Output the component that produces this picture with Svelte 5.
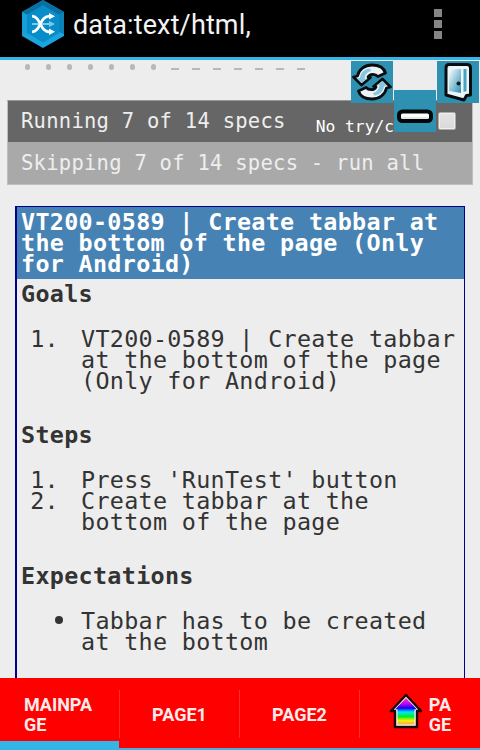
<script>
  const symbols = Array.from({ length: 14 }, (_, i) => (i < 7 ? 'passed' : 'skipped'));
  const tabs = [
    { lines: ['MAINPA', 'GE'], active: true },
    { lines: ['PAGE1'] },
    { lines: ['PAGE2'] },
    { lines: ['PA', 'GE'], icon: true }
  ];
</script>

<div class="screen">
  <header>
    <svg class="logo" width="42" height="48" viewBox="0 0 42 48">
      <path d="M21 0 42 12V36L21 48 0 36V12Z" fill="#1ca4df" />
      <path d="M21 0 42 12V34L37 31V15L21 5.500 5 15 0 12Z" fill="#0871a1" />
      <path d="M37 14.500 42 12V34L37 32Z" fill="#0b82b8" />
      <path d="M0 12 5 15V33L0 36Z" fill="#189fd9" />
      <path d="M21 5.500 37 15V33L21 42.500 5 33V15Z" fill="#078dc8" />
      <path d="M10 24H28" stroke="#7fc8e8" stroke-width="2" fill="none" />
      <path d="m27 21 6 3-6 3Z" fill="#7fc8e8" />
      <path d="M10 16.200C19 16 17 32 28 31.800M10 31.800C19 32 17 16 28 16.200" stroke="#fff" stroke-width="2.700" fill="none" />
      <path d="m27 13 6 3.200-6 3.200ZM27 28.600l6 3.200-6 3.200Z" fill="#fff" />
    </svg>
    <h1>data:text/html,</h1>
    <div class="menu"><i></i><i></i><i></i></div>
  </header>

  <main>
    <div class="symbols">
      {#each symbols as s}<span class={s}></span>{/each}
    </div>

    <section class="alert">
      <div class="bar running">
        <span>Running 7 of 14 specs</span>
        <span class="catch">No try/catch</span>
        <span class="check"></span>
      </div>
      <div class="bar skipping">Skipping 7 of 14 specs - run all</div>
    </section>

    <article>
      <h2>VT200-0589 | Create tabbar at the bottom of the page (Only for Android)</h2>
      <h3>Goals</h3>
      <div class="list">
        <div class="item"><b>1.</b><p>VT200-0589 | Create tabbar at the bottom of the page (Only for Android)</p></div>
      </div>
      <h3>Steps</h3>
      <div class="list">
        <div class="item"><b>1.</b><p>Press 'RunTest' button</p></div>
        <div class="item"><b>2.</b><p>Create tabbar at the bottom of the page</p></div>
      </div>
      <h3>Expectations</h3>
      <div class="list">
        <div class="item"><b><i class="bullet"></i></b><p>Tabbar has to be created at the bottom</p></div>
      </div>
    </article>
  </main>

  <div class="tool refresh">
    <svg width="42" height="42" viewBox="0 0 42 42">
      {#each [0, 180] as angle}
        <g transform="rotate({angle} 21 21)">
          <path d="M2.500 16 6.500 15C8 8 14 4 21 4C28 4 33 7 34.500 12L27 15.500C24 12.500 19 12.500 17 16L19.500 16.500 10.500 24Z" fill="#eaf3f7" stroke="#080d10" stroke-width="2.800" stroke-linejoin="round" />
          <path d="M6 17.500 9 16.800C10 10.500 14 8 19 7.500L20 10C16 11 14 14 13.500 17.500L16 18 10.500 22Z" fill="#86c7df" />
        </g>
      {/each}
    </svg>
  </div>
  <div class="tool exit">
    <svg width="42" height="42" viewBox="0 0 42 42">
      <defs>
        <linearGradient id="door" x1="0" y1="0" x2="1" y2="1">
          <stop offset="0" stop-color="#fff" /><stop offset="1" stop-color="#278fb5" />
        </linearGradient>
      </defs>
      <path d="M12 3.500H30Q33.500 3.500 33.500 7V34L29.500 34.500 27 39 9 34V7Q9 3.500 12 3.500Z" fill="#edf5f8" stroke="#080d10" stroke-width="3" stroke-linejoin="round" />
      <path d="M12 8.500 24 8V32L12 30Z" fill="url(#door)" />
      <path d="M26.500 8H29.500V30L26.500 31Z" fill="#46a3c4" />
      <circle cx="21.500" cy="22.500" r="2" fill="#10191d" />
    </svg>
  </div>
  <div class="tool minus">
    <svg width="42" height="42" viewBox="0 0 42 42">
      <rect x="5" y="21.500" width="32" height="9.500" rx="3.500" fill="#fff" stroke="#030607" stroke-width="4" />
      <path d="M8 28H34" stroke="#e3e9eb" stroke-width="2" />
    </svg>
  </div>

  <nav>
    {#each tabs as tab}
      <div class="tab" class:active={tab.active}>
        {#if tab.icon}
          <svg class="arrow" width="34" height="36" viewBox="0 0 34 36">
            <defs>
              <linearGradient id="rainbow" x1="0" y1="0" x2="0" y2="1">
                <stop offset="0" stop-color="#f24a86" /><stop offset=".22" stop-color="#c000ff" />
                <stop offset=".38" stop-color="#1600e8" /><stop offset=".53" stop-color="#00e5ff" />
                <stop offset=".7" stop-color="#00ef20" /><stop offset=".86" stop-color="#fff000" />
                <stop offset="1" stop-color="#ff9c55" />
              </linearGradient>
            </defs>
            <path d="M17 2 32 18H28V34H6V18H2Z" fill="#fff" stroke="#190b0b" stroke-width="2.500" stroke-linejoin="round" />
            <path d="M17 5 28 16.500H25.500V31.500H8.500V16.500H6Z" fill="url(#rainbow)" />
          </svg>
        {/if}
        <div class="label">{#each tab.lines as line}<div>{line}</div>{/each}</div>
      </div>
    {/each}
  </nav>
</div>

<style>
  :global(body) { margin: 0; }
  .screen {
    position: relative;
    width: 480px;
    height: 750px;
    overflow: hidden;
    display: flex;
    flex-direction: column;
    background: #ededed;
    font-family: "DejaVu Sans Mono", monospace;
  }
  header {
    box-sizing: border-box;
    height: 60px;
    flex: none;
    display: flex;
    align-items: flex-start;
    background: #000;
    border-bottom: 3px solid #33b5e5;
    padding-left: 22px;
  }
  .logo { flex: none; }
  h1 {
    margin: 9px 0 0 9px;
    font: 400 27px/32px Roboto, sans-serif;
    color: #f3f3f3;
    letter-spacing: 0.140px;
    flex: 1;
  }
  .menu { display: flex; flex-direction: column; gap: 3px; padding: 9px 38px 0 0; }
  .menu i { width: 8px; height: 8px; background: #858585; }
  main { flex: 1; min-height: 0; overflow: hidden; }
  .symbols { display: flex; height: 40px; padding-left: 17px; }
  .symbols span { width: 21px; display: flex; justify-content: center; }
  .symbols span::before { content: ""; background: #b8b8b8; }
  .symbols .passed::before { width: 5px; height: 6px; border-radius: 3px; margin-top: 4px; }
  .symbols .skipped::before { width: 8px; height: 2px; margin-top: 8px; }
  .alert { margin: 0 7px; border: 1px solid #bdbdbd; border-top-color: #999; height: 83px; }
  .bar {
    box-sizing: border-box;
    height: 41px;
    padding-left: 13px;
    font-size: 20.500px;
    line-height: 40px;
    letter-spacing: 0.260px;
    color: #eee;
    white-space: nowrap;
  }
  .running { display: flex; background: #666; }
  .skipping { height: 42px; line-height: 42px; background: #a9a9a9; }
  .catch { margin-left: 30px; width: 122px; overflow: hidden; font-size: 16.300px; line-height: 52px; letter-spacing: 0; color: #fff; }
  .check {
    box-sizing: border-box;
    margin-top: 11px;
    width: 18px;
    height: 18px;
    border: 1px solid #aaa;
    border-radius: 2px;
    background: linear-gradient(#e4e4e4, #d9d9d9);
    box-shadow: inset 0 0 0 1px #eee;
  }
  article {
    box-sizing: border-box;
    margin: 21px 15px 0;
    height: 600px;
    border: 1px solid #00008b;
    border-left-width: 2px;
    color: #333;
    font-size: 23.400px;
    line-height: 21px;
    letter-spacing: 0.313px;
  }
  h2 { margin: 0 0 5px; padding: 5px 20px 3px 4px; height: 64px; background: #4682b4; color: #fff; font-size: inherit; font-weight: 700; }
  h3 { margin: 0 0 24px 4px; font-size: inherit; font-weight: 700; }
  .list { margin-bottom: 33px; }
  .item { display: flex; }
  .item b { width: 42px; flex: none; padding-right: 22px; text-align: right; font-weight: 400; }
  .item p { margin: 0; }
  .bullet { display: inline-block; width: 8px; height: 8px; margin-right: -4px; border-radius: 50%; background: #333; vertical-align: 5px; }
  .tool { position: absolute; width: 42px; height: 42px; background: #2e91b2; }
  .tool svg { display: block; }
  .refresh { left: 351px; top: 61px; }
  .exit { left: 437px; top: 61px; }
  .minus { left: 394px; top: 90px; }
  nav { flex: none; height: 72px; display: flex; background: #f00; }
  .tab {
    box-sizing: border-box;
    position: relative;
    width: 120px;
    padding-top: 4px;
    display: flex;
    align-items: center;
    justify-content: center;
    border-bottom: 2px solid #4aaed8;
    color: #fbeaea;
    font: 700 18px/20px Roboto, sans-serif;
  }
  .tab:not(:last-child)::after { content: ""; position: absolute; right: 0; top: 12px; width: 1px; height: 48px; background: #ff3030; }
  .tab.active::before { content: ""; position: absolute; left: 0; right: 1px; bottom: -2px; height: 9px; background: #33b5e5; }
  .label { margin-left: -1px; }
  .active .label { margin-left: -4px; }
  .arrow { margin: -8px 7px 0 0; }
</style>
